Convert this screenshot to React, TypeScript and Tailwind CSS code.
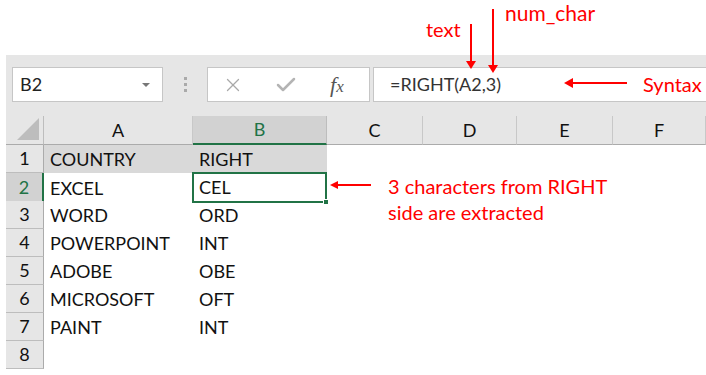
import { X, Check } from "lucide-react";

const cols = ["A", "B", "C", "D", "E", "F"];

const rows: [string, string][] = [
  ["COUNTRY", "RIGHT"],
  ["EXCEL", "CEL"],
  ["WORD", "ORD"],
  ["POWERPOINT", "INT"],
  ["ADOBE", "OBE"],
  ["MICROSOFT", "OFT"],
  ["PAINT", "INT"],
  ["", ""],
];

const grid = "grid grid-cols-[38px_149px_134px_96px_94px_96px_1fr]";

export default function App() {
  return (
    <div className="relative w-[706px] h-[375px] bg-white overflow-hidden font-['Lato','Open_Sans',sans-serif] text-[18px] text-[#111]">
      {/* annotation space */}
      <div className="h-[55px]" />

      {/* name box + formula bar */}
      <div className="ml-[6px] h-[61px] bg-[#e6e6e6] flex items-start pt-[12px] pl-[6px]">
        <div className="w-[151px] h-[35px] bg-white border border-[#c6c6c6] flex items-center justify-between pl-[7px] pr-[12px]">
          <span className="text-[#222]">B2</span>
          <span className="w-0 h-0 border-l-[4px] border-r-[4px] border-t-[4px] border-l-transparent border-r-transparent border-t-[#777]" />
        </div>
        <div className="w-[44px] h-[35px] flex flex-col items-center justify-center gap-[3px]">
          <span className="w-[3px] h-[3px] bg-[#aaa]" />
          <span className="w-[3px] h-[3px] bg-[#aaa]" />
          <span className="w-[3px] h-[3px] bg-[#aaa]" />
        </div>
        <div className="w-[163px] h-[35px] bg-white border border-[#c6c6c6] flex items-center pl-[14px]">
          <X className="w-[22px] h-[22px] text-[#a9a9a9]" strokeWidth={1.4} />
          <Check className="w-[24px] h-[24px] ml-[30px] text-[#b4b4b4]" strokeWidth={2.5} />
          <span className="ml-[32px] font-['Liberation_Serif',serif] italic text-[22px] text-[#555] leading-none">
            f<span className="text-[17px]">x</span>
          </span>
        </div>
        <div className="ml-[3px] flex-1 h-[35px] bg-white border border-[#c6c6c6] border-r-0 flex items-center pl-[16px] text-[#333]">
          =RIGHT(A2,3)
        </div>
      </div>

      {/* column headers */}
      <div className={`${grid} ml-[6px] h-[29px] bg-[#e6e6e6]`}>
        <div className="relative border-r border-[#bdbdbd] border-b border-b-[#ababab]">
          <svg className="absolute right-[4px] bottom-[4px]" width="22" height="22">
            <polygon points="22,0 22,22 0,22" fill="#bdbdbd" />
          </svg>
        </div>
        {cols.map((c) => (
          <div
            key={c}
            className={
              c === "B"
                ? "flex items-center justify-center bg-[#d2d2d2] text-[#217346] border-b-2 border-[#217346] border-r border-r-[#bdbdbd]"
                : "flex items-center justify-center border-r border-[#c8c8c8] border-b border-b-[#ababab]"
            }
          >
            {c}
          </div>
        ))}
      </div>

      {/* rows */}
      {rows.map(([a, b], i) => {
        const n = i + 1;
        return (
          <div key={n} className={`${grid} ml-[6px] h-[28px]`}>
            <div
              className={
                n === 2
                  ? "flex items-center justify-center bg-[#d2d2d2] text-[#217346] border-b border-[#bdbdbd] border-r-2 border-r-[#217346]"
                  : "flex items-center justify-center bg-[#e6e6e6] border-b border-[#bdbdbd] border-r border-r-[#ababab]"
              }
            >
              {n}
            </div>
            <div className={`flex items-center pl-[6px] ${n === 1 ? "bg-[#d9d9d9]" : ""}`}>{a}</div>
            <div
              className={
                n === 2
                  ? "relative flex items-center pl-[5px] border-2 border-[#217346] -ml-[1px] -mt-[1px] h-[31px]"
                  : `flex items-center pl-[6px] ${n === 1 ? "bg-[#d9d9d9]" : ""}`
              }
            >
              {b}
              {n === 2 && (
                <span className="absolute -right-[4px] -bottom-[4px] w-[6px] h-[6px] bg-[#217346] border border-white" />
              )}
            </div>
            <div />
            <div />
            <div />
            <div />
          </div>
        );
      })}

      {/* annotations */}
      <div className="absolute left-[426px] top-[19px] text-[#ff0000] text-[20px] leading-none">text</div>
      <div className="absolute left-[505px] top-[2px] text-[#ff0000] text-[21px] leading-none">num_char</div>
      <div className="absolute left-[643px] top-[74px] text-[#ff0000] text-[20px] leading-none">Syntax</div>
      <div className="absolute left-[388px] top-[173px] text-[#ff0000] text-[20px] leading-[26px]">
        <div>3 characters from RIGHT</div>
        <div>side are extracted</div>
      </div>
      <svg className="absolute inset-0 pointer-events-none" width="706" height="375">
        <g stroke="#ff0000" strokeWidth="2" fill="#ff0000">
          <line x1="471" y1="24" x2="471" y2="62" />
          <polygon points="466,61 476,61 471,69" stroke="none" />
          <line x1="493" y1="9" x2="493" y2="66" />
          <polygon points="488,65 498,65 493,73" stroke="none" />
          <line x1="627" y1="83" x2="572" y2="83" />
          <polygon points="573,78 573,88 564,83" stroke="none" />
          <line x1="371" y1="185" x2="337" y2="185" />
          <polygon points="338,181 338,189 330,185" stroke="none" />
        </g>
      </svg>
    </div>
  );
}
